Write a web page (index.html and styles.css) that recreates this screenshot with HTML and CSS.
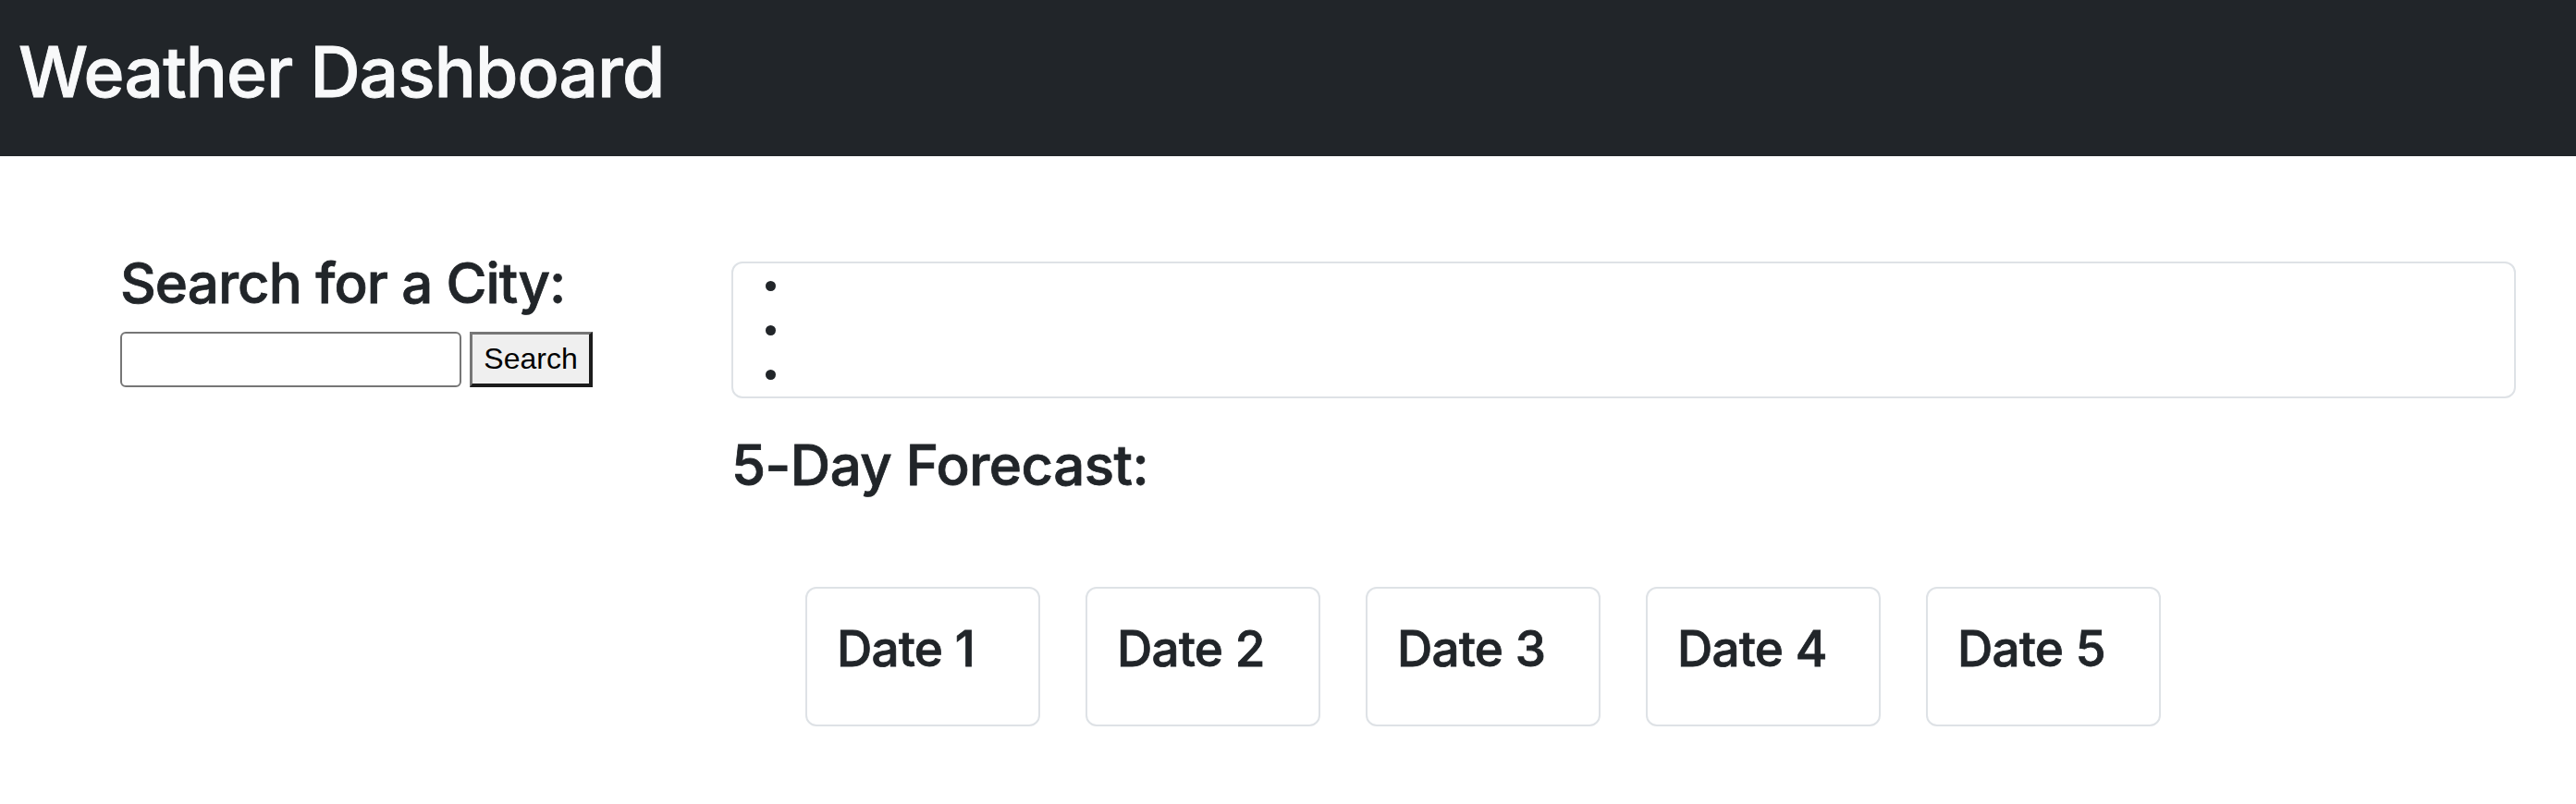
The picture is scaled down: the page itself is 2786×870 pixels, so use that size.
FILE: index.html
```html
<!DOCTYPE html>
<html lang="en">
<head>
<meta charset="utf-8">
<title>Weather Dashboard</title>
<link rel="stylesheet" href="styles.css">
</head>
<body>
<header class="topbar">
  <h1 class="title">Weather Dashboard</h1>
</header>
<main class="layout">
  <section class="search-col">
    <h2 class="heading">Search for a City:</h2>
    <form class="search-form">
      <input class="search-input" type="text">
      <button class="search-btn" type="button">Search</button>
    </form>
  </section>
  <section class="content-col">
    <ul class="history">
      <li></li>
      <li></li>
      <li></li>
    </ul>
    <h2 class="heading forecast-heading">5-Day Forecast:</h2>
    <div class="cards">
      <div class="card"><h3 class="card-title">Date 1</h3></div>
      <div class="card"><h3 class="card-title">Date 2</h3></div>
      <div class="card"><h3 class="card-title">Date 3</h3></div>
      <div class="card"><h3 class="card-title">Date 4</h3></div>
      <div class="card"><h3 class="card-title">Date 5</h3></div>
    </div>
  </section>
</main>
</body>
</html>
```

FILE: styles.css
```css
* { box-sizing: border-box; }

body {
  margin: 0;
  font-family: Inter, "Liberation Sans", Helvetica, Arial, sans-serif;
  color: #212529;
  background: #fff;
}

.topbar {
  background: #212529;
  height: 169px;
  padding: 30px 20px 0 20px;
}

.title {
  margin: 0;
  font-size: 75px;
  line-height: 96px;
  font-weight: 500;
  letter-spacing: -0.9px;
  color: #f8f9fa;
  -webkit-text-stroke: 0.9px #f8f9fa;
}

.layout {
  display: flex;
  align-items: flex-start;
  padding: 99px 0 0 130px;
}

.search-col {
  width: 661px;
  flex: none;
}

.heading {
  margin: 0 0 15px 0;
  font-size: 60px;
  line-height: 76px;
  font-weight: 500;
  letter-spacing: -0.9px;
  -webkit-text-stroke: 0.8px #212529;
}

.search-form {
  display: flex;
  gap: 9px;
  margin: 0;
}

.search-input {
  width: 369px;
  height: 60px;
  border: 2px solid #767676;
  border-radius: 6px;
  background: #fff;
  margin: 0;
  font-size: 32px;
}

.search-btn {
  width: 133px;
  height: 60px;
  margin: 0;
  padding: 0;
  background: #efefef;
  border-style: solid;
  border-width: 3px 4px 4px 3px;
  border-color: #767676 #1c1c1c #1c1c1c #767676;
  font-family: "Liberation Sans", Helvetica, Arial, sans-serif;
  font-size: 32px;
  color: #000;
}

.content-col {
  width: 1930px;
  flex: none;
  margin-top: 15px;
}

.history {
  margin: 0 0 34px 0;
  padding: 0 0 0 64px;
  border: 2px solid #dee2e6;
  border-radius: 12px;
  font-size: 34px;
  line-height: 48px;
  list-style: disc;
}

.history li {
  height: 48px;
}

.heading.forecast-heading {
  margin-bottom: 94px;
  letter-spacing: -0.5px;
}

.cards {
  display: flex;
  gap: 49px;
  padding-left: 80px;
}

.card {
  width: 254px;
  flex: none;
  border: 2px solid #dee2e6;
  border-radius: 12px;
  padding: 32px;
}

.card-title {
  margin: 0 0 16px 0;
  font-size: 53px;
  line-height: 67px;
  font-weight: 500;
  letter-spacing: -0.7px;
  -webkit-text-stroke: 0.8px #212529;
  white-space: nowrap;
}
```
